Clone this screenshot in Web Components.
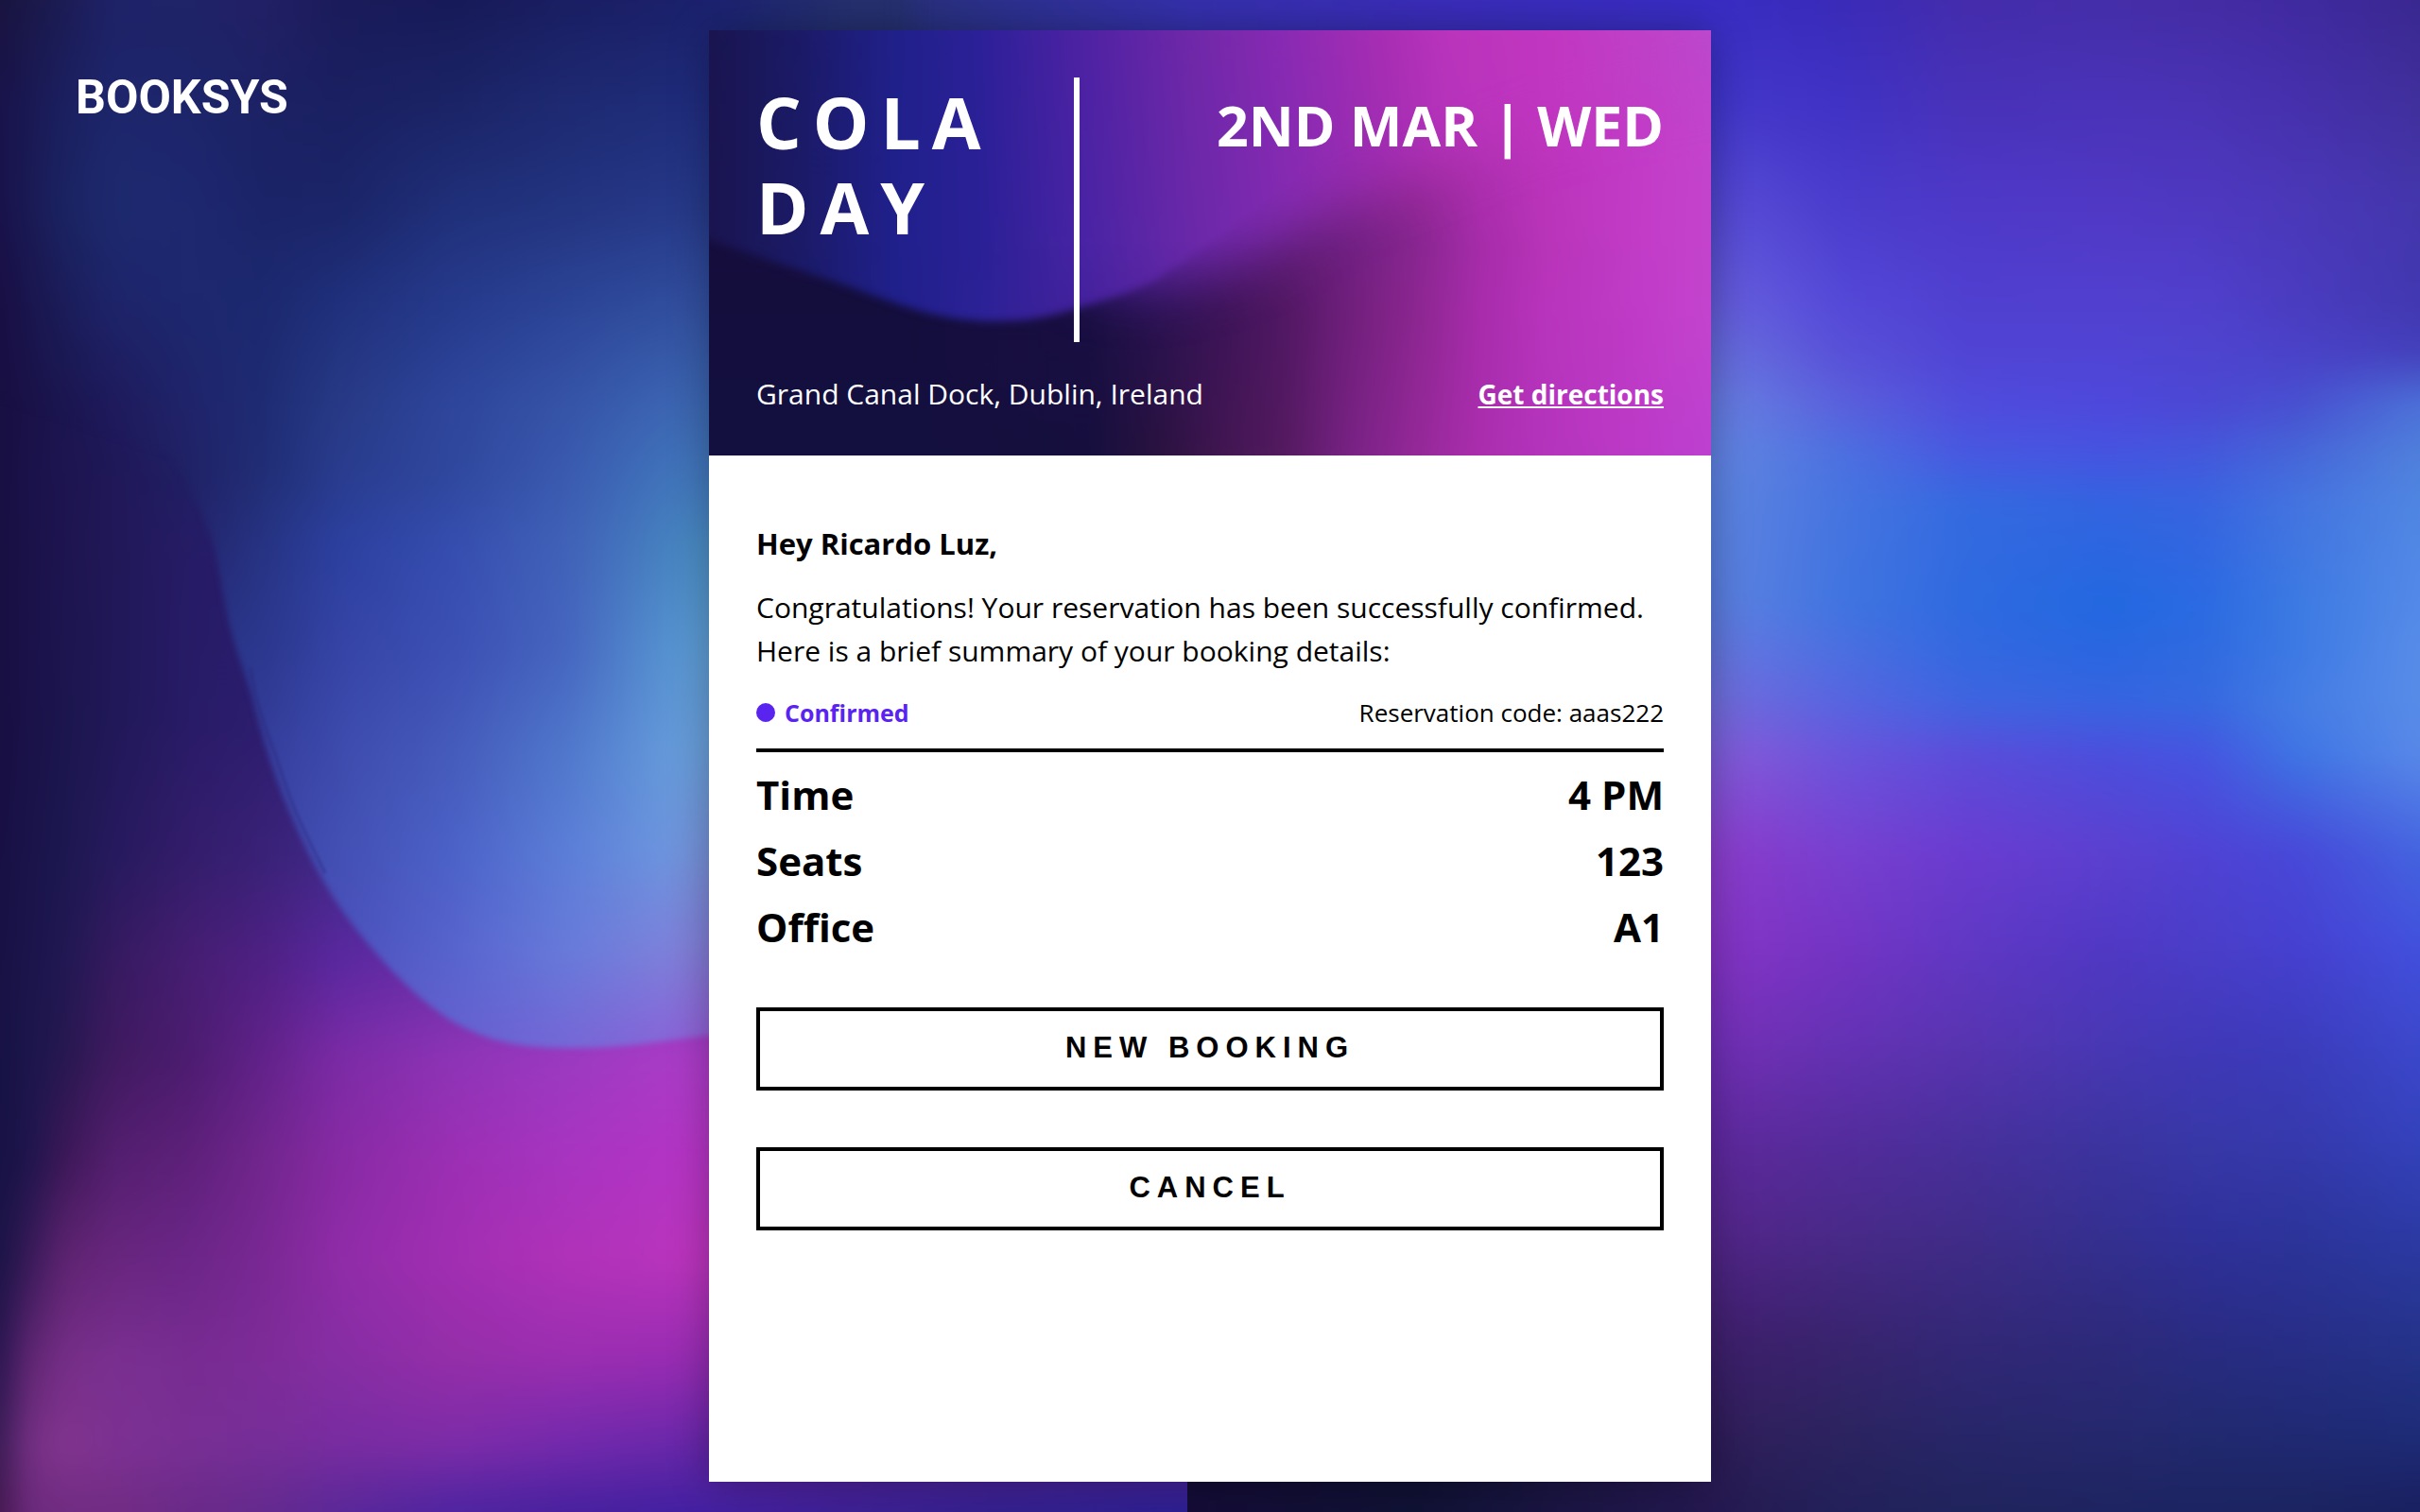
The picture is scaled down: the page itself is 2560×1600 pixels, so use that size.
<!DOCTYPE html>
<html lang="en">
<head>
<meta charset="utf-8">
<title>Booksys – Reservation confirmed</title>
<style>
  html, body { margin: 0; }
  body { font-family: "Open Sans", "Noto Sans", sans-serif; background: #1c1c58; color: #000; }
</style>
</head>
<body>
<booking-page>
  <booksys-logo slot="brand" href="#home">BOOKSYS</booksys-logo>
  <booking-card>
    <event-header slot="header" href="#directions">
      <span slot="title">COLA DAY</span>
      <span slot="date">2ND MAR | WED</span>
      <span slot="place">Grand Canal Dock, Dublin, Ireland</span>
      <span slot="link">Get directions</span>
    </event-header>
    <booking-message>
      <span slot="greeting">Hey Ricardo Luz,</span>
      Congratulations! Your reservation has been successfully confirmed. Here is a brief summary of your booking details:
    </booking-message>
    <booking-summary>
      <span slot="status">Confirmed</span>
      <span slot="code">Reservation code: aaas222</span>
      <detail-row>Time<span slot="value">4 PM</span></detail-row>
      <detail-row>Seats<span slot="value">123</span></detail-row>
      <detail-row>Office<span slot="value">A1</span></detail-row>
    </booking-summary>
    <booking-actions>
      <outline-button>NEW BOOKING</outline-button>
      <outline-button>CANCEL</outline-button>
    </booking-actions>
  </booking-card>
</booking-page>

<script>
/* A mesh is a list of column positions and rows of [y, "colour colour ..."].
   Each row is a horizontal gradient that fades in over the row above it. */
let meshCount = 0;
function mesh(cols, rows, pad = 60) {
  const key = 'm' + meshCount++;
  const x0 = cols[0], x1 = cols[cols.length - 1];
  const bottom = rows[rows.length - 1][0] + pad;
  let defs = '', body = '';
  rows.forEach(([y, colours], i) => {
    const stops = colours.split(' ').map((c, n) =>
      `<stop offset="${(cols[n] - x0) / (x1 - x0)}" stop-color="#${c}"/>`).join('');
    defs += `<linearGradient id="${key}h${i}" gradientUnits="userSpaceOnUse" x1="${x0}" x2="${x1}" y1="0" y2="0">${stops}</linearGradient>`;
    const top = i ? rows[i - 1][0] : y - pad;
    const box = `x="${x0 - pad}" y="${top}" width="${x1 - x0 + 2 * pad}" height="${bottom - top}"`;
    if (i) {
      defs += `<linearGradient id="${key}v${i}" gradientUnits="userSpaceOnUse" x1="0" x2="0" y1="${top}" y2="${y}"><stop offset="0" stop-color="#fff" stop-opacity="0"/><stop offset="1" stop-color="#fff"/></linearGradient>
        <mask id="${key}k${i}" maskUnits="userSpaceOnUse" ${box}><rect ${box} fill="url(#${key}v${i})"/></mask>`;
    }
    body += `<rect ${box} fill="url(#${key}h${i})"${i ? ` mask="url(#${key}k${i})"` : ''}/>`;
  });
  return `<defs>${defs}</defs>${body}`;
}
const blur = (id, r) => `<filter id="${id}" filterUnits="userSpaceOnUse" x="-200" y="-200" width="3000" height="2000" color-interpolation-filters="sRGB"><feGaussianBlur stdDeviation="${r}"/></filter>`;

function define(name, html, setup) {
  const template = document.createElement('template');
  template.innerHTML = html;
  customElements.define(name, class extends HTMLElement {
    constructor() {
      super();
      this.attachShadow({ mode: 'open' }).append(template.content.cloneNode(true));
    }
    connectedCallback() { if (setup) setup(this, this.shadowRoot); }
  });
}

/* ---------- page backdrop ---------- */
const leftCols = [0, 30, 70, 120, 200, 280, 360, 480, 600, 700, 750, 900, 1050, 1258];
const ext = (c) => ' ' + c + ' ' + c + ' ' + c;
const leftBase = [
  [0,    '19143f 1a184a 1c1c55 1e2268 1f2367 231f66 1a1b5a 171a58 1a1e62 1b2069 1c2270 25306f 2c308c 3530ac'],
  [110,  '19134a 1a184c 1b2060 1e266c 1d256a 1c2264 1a2062 1b2466 1e2a72 1f2c78 202c80 25306f 2c308c 3530ac'],
  [220,  '19124a 1a194f 1b2463 1d2a6e 1e2870 1b2468 1b2568 20307a 233480 263888 263a88' + ext('263a88')],
  [320,  '190f44 1a174e 1b1d5a 1e246a 1d286e 1c296f 20307c 263a8c 2c4496 304c9c 3350a0' + ext('3350a0')],
  [430,  '180f42 1a1248 1b1650 1e1a5c 20246a 1e2c74 283a86 2e469c 3654a8 3c64b2 3c68b0' + ext('3c68b0')],
  [500,  '180f42 1a124a 1d1550 201858 201f64 212a72 283a86 2e469c 3654a8 3c64b2 3c68b0' + ext('3c68b0')],
  [580,  '180f42 1b124a 1e1550 211858 261c66 281c6c 281c6c 281c6c 281c6c 281c6c 281c6c' + ext('281c6c')],
  [750,  '180f42 1a1249 1c164e 201858 281b67 2c1d6e 301f74 341f78 341f78 341f78 341f78' + ext('341f78')],
  [910,  '181044 1a144b 1d1850 271a5e 341d6b 3a2278 422a8a 482a90 542a98 602c9c 602c9c' + ext('602c9c')],
  [1015, '181144 1b154c 211852 361a60 461e72 4f2084 5a28a0 6a30a8 7a34b0 8838b8 8a38b8' + ext('8a38b8')],
  [1120, '171245 1b164c 281850 401a60 4c1c70 62228a 7c2ba6 8e34b6 9c3ac2 a83cc6 ac3cc8' + ext('ac3cc8')],
  [1226, '171245 1e154c 3e1858 541f70 5e207a 72268e 882aa4 9c2fb4 a834c0 b234c4 b634c4' + ext('b634c4')],
  [1333, '1a1446 381a58 602472 68267e 6c2688 7a2894 902ca8 a22eb2 b032b8 b834bc bc34bc' + ext('bc34bc')],
  [1440, '2a1650 602672 762e88 7a3090 782c92 7e2c98 862ea4 942ea8 9a2eb0 982cb2 942cb2' + ext('942cb2')],
  [1530, '3a1c54 743084 82348e 7c3192 782f94 762e98 782ca0 7c2ca8 7229ac 6a28aa 6426a8' + ext('5a249c')],
  [1600, '44184f 6c2a7c 702c82 722c84 6a2a88 642a8e 5a2898 4e24a0 48219e 4220a0 4220a0 3c2094 32208e 2a1f90'],
];
const blobCols = [0, 70, 120, 200, 280, 360, 480, 600, 700, 760, 900];
const blobRows = [
  [0,    '19143f 1c1c55 1e2268 1f2367 231f66 1a1b5a 171a58 1a1e62 1b2069 1c2270 25306f'],
  [110,  '19134a 1b2060 1e266c 1d256a 1c2264 1a2062 1b2466 1e2a72 1f2c78 202c80 25306f'],
  [220,  '19124a 1b2463 1d2a6e 1e2870 1b2468 1b2568 20307a 233480 263888 263a88 263a88'],
  [320,  '190f44 1b1d5a 1e246a 1d286e 1c296f 20307c 263a8c 2c4496 304c9c 3350a0 3350a0'],
  [430,  '180f42 1b1650 1e1a5c 20246a 1e2c74 283a86 2e469c 3654a8 3c64b2 3c68b0 3c68b0'],
  [500,  '180f42 1d1550 201858 202266 212e76 293c8e 30489e 3a5ab0 4072ba 4278bc 4278bc'],
  [580,  '1d1550 1e1850 201a5a 24246c 273484 2c40a0 364eb0 4162b8 4680c0 4c92c6 4c92c6'],
  [690,  '283486 283486 283486 283486 2c388e 3644a6 3d50b4 4666c0 5590d0 60a0d6 60a0d6'],
  [800,  '343c98 343c98 343c98 343c98 363e9c 3e4cae 465cbc 5078cc 6498da 6ca0da 6ca0da'],
  [905,  '3c44a8 3c44a8 3c44a8 3c44a8 3c44a8 4450b4 4c62c8 5c7ed8 6c94de 7a90d6 7a90d6'],
  [1010, '484cb4 484cb4 484cb4 484cb4 484cb4 4c50bc 5864ce 687ada 7c80da 847ad4 847ad4'],
  [1100, '6058c4 6058c4 6058c4 6058c4 6058c4 6058c4 6460d0 7468d6 8666d8 945ed4 945ed4'],
];
const rightCols = [1258, 1500, 1810, 1850, 1950, 2080, 2230, 2330, 2430, 2560];
const rightRows = [
  [0,    '3530ac 3a2cb8 382cc4 382cc0 3a2bb8 442cac 452ea8 442ca4 402aa0 3a2890'],
  [107,  '3530ac 3a2cb8 3e34c8 4236c8 4032c4 4832b8 4a33b8 4a33b4 4630ac 40309c'],
  [213,  '5044cc 5044cc 5044cc 5448d4 4a3ccc 4e38c8 5038c4 4e38c0 4a38b8 4436ac'],
  [320,  '6258d4 6258d4 6258d4 625adc 5448d8 5040d0 5240d0 5040cc 4a3cc0 4238b0'],
  [373,  '6468d8 6468d8 6468d8 6468dc 5850d8 5044d4 5044d4 4e44d0 4a42c8 4440bc'],
  [427,  '6478dc 6478dc 6478dc 6478e0 5a60dc 504cdc 4e48dc 4c48d4 4850d0 4c70d8'],
  [480,  '6080e0 6080e0 6080e0 5c80e0 4c70e0 4858e0 4654e0 4458dc 4666d8 5080dc'],
  [533,  '5a82e0 5a82e0 5a82e0 5880e0 4674e0 346ae0 3364e0 3864e0 4474e0 5086e2'],
  [640,  '5a7cdc 5a7cdc 5a7cdc 567ee0 4074e0 2f6ae0 2268e0 2a6ae2 3c7ae2 548ae8'],
  [693,  '6474d8 6474d8 6474d8 6074e0 4c6ee0 3468e0 2a66e0 306ae0 3e7ae4 588ce8'],
  [746,  '706cd8 706cd8 706cd8 6c68dc 5864e0 4064e0 3864e0 3668e0 447ce4 588ce8'],
  [800,  '7c5cd8 7c5cd8 7c5cd8 8058d8 6a54dc 5c4cda 4c4edc 4654e0 3e74e4 5888e8'],
  [902,  '8a40cc 8a40cc 8a40cc 863ccc 7840d0 6a3cd0 5c40d0 5042d4 4848d8 4464e0'],
  [1004, '8434c4 8434c4 8434c4 8034c4 7434c4 6038c4 5038c4 4a3ec8 4640d0 4250dc'],
  [1106, '7030b8 7030b8 7030b8 7030b4 6432b4 5834b0 4838b4 4038b8 3c3cbc 3c48cc'],
  [1208, '6029a0 6029a0 6029a0 5c2a9c 542c9c 48309c 3c34a0 3838a8 3639ac 3442bc'],
  [1310, '522688 522688 522688 502688 482a88 402c88 343090 30309a 2c349a 2c3aa4'],
  [1412, '40206e 40206e 40206e 3e206e 3a2470 342878 2e2a7c 2a2c84 282e88 26348c'],
  [1514, '140c36 10102f 2e1c58 30205c 2c2460 28266a 26286e 222a70 202a74 1e2c78'],
  [1600, '140c36 101236 241850 241c52 22205a 20245c 1e2460 1c2462 1c2460 1a2060'],
];
define('page-backdrop', `
  <style>
    :host { display: block; overflow: hidden; }
    svg { display: block; width: 100%; height: 100%; }
  </style>
  <svg viewBox="0 0 2560 1600" preserveAspectRatio="none" aria-hidden="true">
    <defs>
      ${blur('soft', 12)}${blur('edge', 3)}${blur('line', 1)}
      <clipPath id="leftHalf"><rect x="0" y="0" width="1256" height="1600"/></clipPath>
      <clipPath id="rightHalf"><rect x="1256" y="0" width="1304" height="1600"/></clipPath>
      <mask id="blob" maskUnits="userSpaceOnUse" x="0" y="0" width="1258" height="1600">
        <path filter="url(#edge)" fill="#fff" d="M-60-60H1000V1040C900 1090 800 1094 748 1096C700 1102 650 1110 604 1109C580 1109 560 1108 539 1104C516 1099 495 1091 474 1078C450 1062 428 1042 408 1020C388 998 368 974 351 947C333 918 317 885 302 849C288 815 276 775 266 735C258 710 252 695 245 670C236 635 232 600 224 571C216 545 200 510 180 480L-60 400Z"/>
      </mask>
    </defs>
    <g clip-path="url(#rightHalf)"><g filter="url(#soft)">${mesh(rightCols, rightRows)}</g></g>
    <g clip-path="url(#leftHalf)">
      <g filter="url(#soft)">${mesh(leftCols, leftBase)}</g>
      <g mask="url(#blob)"><g filter="url(#soft)">${mesh(blobCols, blobRows)}</g></g>
      <path filter="url(#line)" d="M265 707C270 740 280 770 292 800C300 825 308 848 316 866C326 888 336 908 344 924" fill="none" stroke="#2c2478" stroke-opacity=".3" stroke-width="4"/>
    </g>
  </svg>`);

/* ---------- header artwork ---------- */
const topCols = [0, 93, 196, 286, 403, 506, 610, 713, 782, 885, 1060];
const topRows = [
  [0,   '1a1550 1b1a66 20208a 2c2098 5022a4 6e28a8 8a2ab4 a82eb4 ba34bc c236c0 bc48cc'],
  [225, '1a1550 1b1a66 20208c 2a2096 4a24a4 6828a8 822ab0 9c2cb0 b032b8 c036c0 c444cc'],
  [320, '1a1550 1b1a66 20208a 2c2296 43209a 5c249c 742498 902898 ae2eac bc34bc c440cc'],
  [450, '1a1550 1b1a66 20208a 2c2296 43209a 5c249c 742498 902898 ae2eac bc34bc bc40d0'],
];
const lowCols = [0, 200, 403, 472, 540, 610, 678, 748, 816, 885, 989, 1060];
const lowRows = [
  [0,   '1c1044 1c1044 36146c 481a78 581e80 682488 7c2490 962a9c b032b0 c036c0 c23cc6 c046cc'],
  [140, '180f40 180f40 281054 3c1668 501a74 682484 802690 962898 ae30b0 bc34bc c23cc8 c444cc'],
  [225, '160e3e 160e3e 20104a 301258 441662 5a1c70 702082 882690 a62caa b834b8 c23cc8 c444cc'],
  [300, '140e3d 140e3d 1a0f42 2a1250 3c1458 521864 701f7c 8c2690 a82cac b834bc c03cc8 c444ce'],
  [450, '13103f 13103f 160f3e 28123f 401650 541a60 782284 942898 aa2eae b434bc bc3ac8 bc40d0'],
];
define('header-artwork', `
  <style>
    :host { display: block; overflow: hidden; }
    svg { display: block; width: 100%; height: 100%; }
  </style>
  <svg viewBox="0 0 1060 450" preserveAspectRatio="none" aria-hidden="true">
    <defs>
      ${blur('soft', 6)}${blur('edge', 4)}${blur('wide', 28)}
      <mask id="wave" maskUnits="userSpaceOnUse" x="0" y="0" width="1060" height="450">
        <path filter="url(#edge)" fill="#fff" d="M-60 195L0 221C50 240 90 252 127 264C165 277 190 287 217 295C245 303 270 308 300 308C330 308 352 305 376 298C410 288 440 280 472 264L560 205L700 100L900-100H-60Z"/>
        <path filter="url(#wide)" fill="#fff" d="M-100-100H1200V40C1000 60 860 105 782 140C740 160 710 165 678 180C640 200 610 222 575 240C540 258 500 268 472 270C440 276 420 268 400 262L300 190L-100 90Z"/>
      </mask>
    </defs>
    <g filter="url(#soft)">${mesh(lowCols, lowRows)}</g>
    <g mask="url(#wave)"><g filter="url(#soft)">${mesh(topCols, topRows)}</g></g>
  </svg>`);

/* ---------- page ---------- */
define('booking-page', `
  <style>
    :host { display: block; position: relative; }
    page-backdrop { position: absolute; inset: 0; }
    .layout {
      position: relative; box-sizing: border-box; min-height: 100vh; padding: 32px;
      display: grid; grid-template-columns: minmax(0, 1fr) minmax(0, 1060px) minmax(0, 1fr);
    }
    header { padding: 36px 48px; }
    main { display: grid; }
  </style>
  <page-backdrop></page-backdrop>
  <div class="layout">
    <header><slot name="brand"></slot></header>
    <main><slot></slot></main>
  </div>`);

define('booksys-logo', `
  <style>
    :host { display: block; }
    a { color: #fff; text-decoration: none; font: 700 50px/70px Roboto, sans-serif; }
  </style>
  <a><slot></slot></a>`,
  (el, root) => { root.querySelector('a').href = el.getAttribute('href'); });

define('booking-card', `
  <style>
    :host { display: flex; flex-direction: column; background: #fff; box-shadow: 0 0 40px rgba(0, 0, 0, .3); }
    .body { display: flex; flex-direction: column; padding: 70px 50px; }
  </style>
  <slot name="header"></slot>
  <div class="body"><slot></slot></div>`);

define('event-header', `
  <style>
    :host { display: block; position: relative; color: #fff; }
    header-artwork { position: absolute; inset: 0; }
    .content { position: relative; display: flex; flex-direction: column; gap: 32px; padding: 50px 50px 42px; }
    .top { display: flex; height: 280px; }
    h1 { box-sizing: border-box; flex: 0 0 35%; margin: 0; padding: 2px 80px 0 0; font-size: 75px; line-height: 90px; letter-spacing: 12px; font-weight: 700; }
    .bar { width: 6px; background: #fff; }
    .date { margin: 0 0 0 auto; font-size: 59px; line-height: 100px; font-weight: 700; }
    .bottom { display: flex; justify-content: space-between; font-size: 30px; line-height: 46px; }
    p { margin: 0; }
    a { color: inherit; font-size: 28px; font-weight: 700; }
  </style>
  <header-artwork></header-artwork>
  <div class="content">
    <div class="top">
      <h1><slot name="title"></slot></h1>
      <div class="bar"></div>
      <p class="date"><slot name="date"></slot></p>
    </div>
    <div class="bottom">
      <p><slot name="place"></slot></p>
      <a><slot name="link"></slot></a>
    </div>
  </div>`,
  (el, root) => { root.querySelector('a').href = el.getAttribute('href'); });

define('booking-message', `
  <style>
    :host { display: flex; flex-direction: column; gap: 22px; margin-bottom: 22px; line-height: 46px; }
    h2 { margin: 0; font-size: 31px; font-weight: 700; }
    p { margin: 0; font-size: 30px; }
  </style>
  <h2><slot name="greeting"></slot></h2>
  <p><slot></slot></p>`);

define('booking-summary', `
  <style>
    :host { display: block; margin-bottom: 50px; }
    .status { display: flex; justify-content: space-between; padding-bottom: 18px; border-bottom: 4px solid #000; margin-bottom: 10px; line-height: 40px; font-size: 26px; }
    .state { display: flex; align-items: center; gap: 10px; color: #5a24f0; font-size: 25px; font-weight: 700; }
    .state::before { content: ""; width: 20px; height: 20px; border-radius: 50%; background: currentColor; }
  </style>
  <div class="status">
    <div class="state"><slot name="status"></slot></div>
    <div><slot name="code"></slot></div>
  </div>
  <slot></slot>`);

define('detail-row', `
  <style>
    :host { display: flex; justify-content: space-between; font-size: 42px; line-height: 70px; font-weight: 700; }
  </style>
  <span><slot></slot></span>
  <slot name="value"></slot>`);

define('booking-actions', `
  <style>
    :host { display: flex; flex-direction: column; gap: 60px; }
  </style>
  <slot></slot>`);

define('outline-button', `
  <style>
    :host { display: block; }
    button {
      display: block; width: 100%; height: 88px; padding: 0 0 2px; border: 4px solid #000; border-radius: 0;
      background: #fff; color: #000; font: 700 31px/40px "Liberation Sans", Arial, sans-serif; letter-spacing: 7px; cursor: pointer;
    }
  </style>
  <button type="button"><slot></slot></button>`);
</script>
</body>
</html>
